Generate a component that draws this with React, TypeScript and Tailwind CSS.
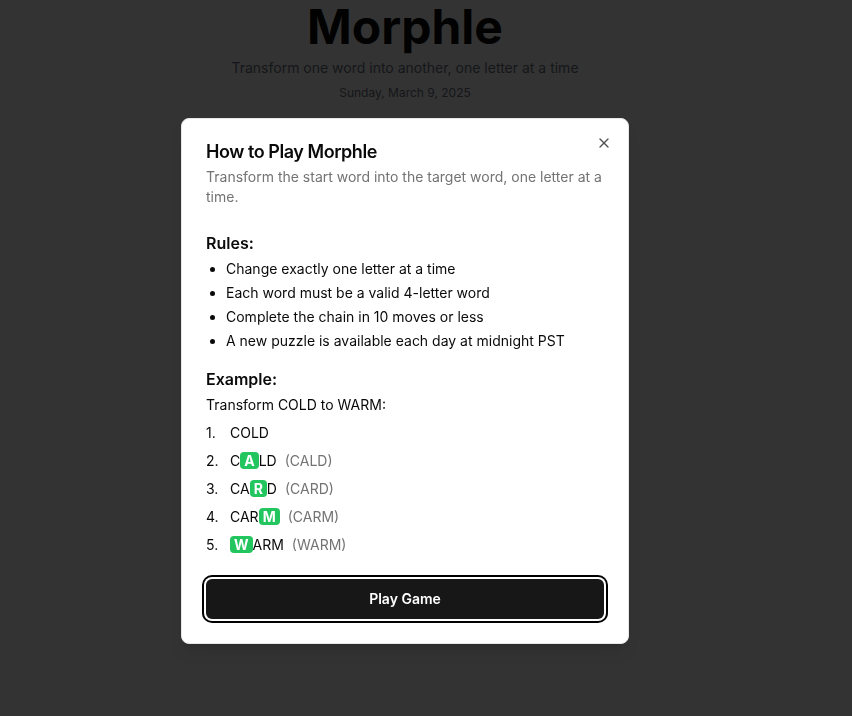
import React from "react";
import { X } from "lucide-react";

const steps: { n: number; pre: string; hi: string; post: string; full?: string }[] = [
  { n: 1, pre: "COLD", hi: "", post: "" },
  { n: 2, pre: "C", hi: "A", post: "LD", full: "CALD" },
  { n: 3, pre: "CA", hi: "R", post: "D", full: "CARD" },
  { n: 4, pre: "CAR", hi: "M", post: "", full: "CARM" },
  { n: 5, pre: "", hi: "W", post: "ARM", full: "WARM" },
];

export default function App() {
  return (
    <div className="relative min-h-[716px] w-full overflow-hidden bg-white font-['Inter',sans-serif] text-[#0a0a0a]">
      <div className="flex w-[810px] flex-col items-center">
        <h1 className="mt-[3px] text-5xl font-bold leading-none">Morphle</h1>
        <p className="mt-[7px] text-sm leading-5 text-[#6b7280]">
          Transform one word into another, one letter at a time
        </p>
        <p className="mt-[5px] text-xs leading-5 text-[#6b7280]">Sunday, March 9, 2025</p>
      </div>

      <div className="fixed inset-0 bg-black/80" />

      <div className="absolute left-[181px] top-[118px] grid w-[448px] gap-4 rounded-lg border border-gray-200 bg-white p-6 shadow-lg">
        <div className="flex flex-col gap-1.5">
          <h2 className="text-lg font-semibold leading-none tracking-tight">How to Play Morphle</h2>
          <p className="text-sm leading-5 text-[#737373]">
            Transform the start word into the target word, one letter at a time.
          </p>
        </div>

        <div className="pt-2 pb-2">
          <h3 className="text-base font-semibold leading-6">Rules:</h3>
          <ul className="mt-1 list-disc space-y-1 pl-5 text-sm leading-5">
            <li>Change exactly one letter at a time</li>
            <li>Each word must be a valid 4-letter word</li>
            <li>Complete the chain in 10 moves or less</li>
            <li>A new puzzle is available each day at midnight PST</li>
          </ul>

          <h3 className="mt-4 text-base font-semibold leading-6">Example:</h3>
          <p className="mt-1 text-sm leading-5">Transform COLD to WARM:</p>
          <div className="mt-2 space-y-2 text-sm leading-5">
            {steps.map((s) => (
              <div key={s.n} className="flex">
                <span className="w-6">{s.n}.</span>
                <span>
                  {s.pre}
                  {s.hi && (
                    <span className="rounded bg-[#22c55e] px-1 font-bold text-white">{s.hi}</span>
                  )}
                  {s.post}
                </span>
                {s.full && <span className="ml-2 text-[#737373]">({s.full})</span>}
              </div>
            ))}
          </div>
        </div>

        <button className="h-10 w-full rounded-md bg-[#171717] text-sm font-semibold text-white ring-2 ring-black ring-offset-2 ring-offset-white">
          Play Game
        </button>

        <button className="absolute right-4 top-4 rounded-sm opacity-70">
          <X className="h-4 w-4" />
        </button>
      </div>
    </div>
  );
}
